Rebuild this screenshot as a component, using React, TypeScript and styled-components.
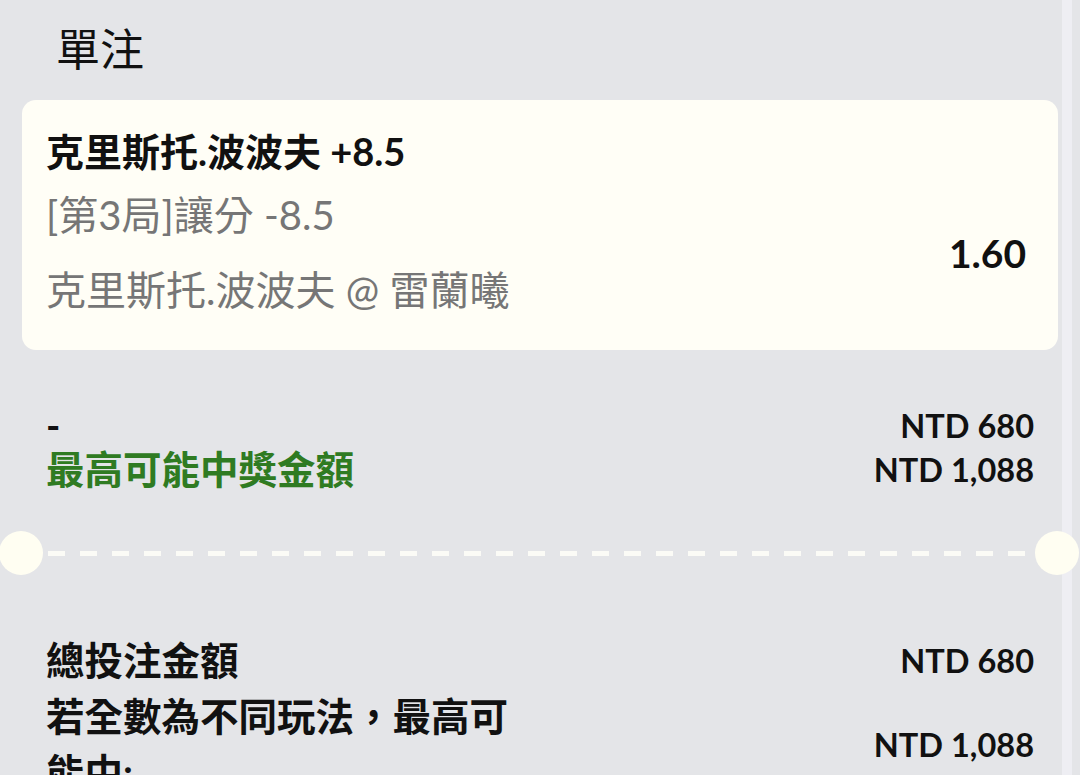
import React from "react";
import styled, { createGlobalStyle } from "styled-components";

const GlobalStyle = createGlobalStyle`
  html, body {
    margin: 0;
    padding: 0;
    background: #e4e5e8;
  }
  body {
    font-family: Lato, "Noto Sans CJK TC", sans-serif;
    color: #111;
  }
`;

const Page = styled.div`
  display: flex;
  width: 1080px;
  height: 775px;
  overflow: hidden;
  background: #e4e5e8;
`;

const Main = styled.div`
  width: 1062px;
  flex: none;
  display: flex;
  flex-direction: column;
  position: relative;
  z-index: 1;
  & > * {
    flex-shrink: 0;
  }
`;

const ScrollTrack = styled.div`
  width: 10px;
  flex: none;
  background: #eeeef3;
`;

const Title = styled.h1`
  margin: 0;
  height: 100px;
  display: flex;
  align-items: center;
  padding-left: 56px;
  padding-bottom: 6px;
  box-sizing: border-box;
  font-family: "Noto Sans CJK TC", sans-serif;
  font-size: 44px;
  font-weight: 400;
  color: #111;
`;

const Card = styled.section`
  margin-left: 22px;
  width: 1036px;
  height: 250px;
  box-sizing: border-box;
  background: #fffef6;
  border-radius: 14px;
  padding: 28px 32px 0 24px;
  display: flex;
  flex-direction: column;
`;

const Selection = styled.div`
  font-size: 38px;
  font-weight: 700;
  line-height: 46px;
  color: #111;
`;

const CardBody = styled.div`
  display: flex;
  align-items: center;
  justify-content: space-between;
  margin-top: 18px;
`;

const Details = styled.div`
  display: flex;
  flex-direction: column;
  gap: 29px;
`;

const Detail = styled.div`
  font-size: 40px;
  font-weight: 400;
  line-height: 46px;
  color: #767676;
`;

const Odds = styled.div`
  font-size: 39px;
  font-weight: 700;
  color: #111;
`;

const Summary = styled.div`
  margin-top: 53px;
  padding: 0 28px 0 46px;
  display: flex;
  flex-direction: column;
`;

const SummaryRow = styled.div`
  display: flex;
  justify-content: space-between;
  align-items: center;
  height: 44px;
`;

const Label = styled.div<{ $green?: boolean }>`
  font-size: 38.5px;
  font-weight: 700;
  color: ${(p) => (p.$green ? "#2f7b22" : "#111")};
  line-height: 44px;
`;

const Amount = styled.div`
  font-size: 32.5px;
  font-weight: 700;
  color: #111;
  white-space: nowrap;
`;

const Divider = styled.div`
  position: relative;
  margin-top: 40px;
  height: 44px;
  display: flex;
  align-items: center;
  padding: 0 30px 0 48px;
`;

const Dashes = styled.div`
  flex: 1;
  height: 5px;
  background: repeating-linear-gradient(
    to right,
    #fbfbf6 0 17px,
    transparent 17px 32px
  );
`;

const Notch = styled.div<{ $side: "left" | "right" }>`
  position: absolute;
  top: 0;
  width: 44px;
  height: 44px;
  border-radius: 50%;
  background: #fffef2;
  ${(p) => (p.$side === "left" ? "left: -1px;" : "left: 1035px;")}
`;

const Totals = styled.div`
  margin-top: 57px;
  padding: 0 28px 0 46px;
  display: flex;
  flex-direction: column;
`;

const TotalRow = styled.div`
  display: flex;
  justify-content: space-between;
  align-items: center;
`;

const TotalLabel = styled.div`
  width: 480px;
  font-size: 38.5px;
  font-weight: 700;
  line-height: 56px;
  color: #111;
`;

export default function App() {
  return (
    <>
      <GlobalStyle />
      <Page>
        <Main>
          <Title>單注</Title>
          <Card>
            <Selection>克里斯托.波波夫 +8.5</Selection>
            <CardBody>
              <Details>
                <Detail>[第3局]讓分 -8.5</Detail>
                <Detail>克里斯托.波波夫 @ 雷蘭曦</Detail>
              </Details>
              <Odds>1.60</Odds>
            </CardBody>
          </Card>
          <Summary>
            <SummaryRow>
              <Label>-</Label>
              <Amount>NTD 680</Amount>
            </SummaryRow>
            <SummaryRow>
              <Label $green>最高可能中獎金額</Label>
              <Amount>NTD 1,088</Amount>
            </SummaryRow>
          </Summary>
          <Divider>
            <Notch $side="left" />
            <Dashes />
            <Notch $side="right" />
          </Divider>
          <Totals>
            <TotalRow>
              <TotalLabel>總投注金額</TotalLabel>
              <Amount>NTD 680</Amount>
            </TotalRow>
            <TotalRow>
              <TotalLabel>若全數為不同玩法，最高可能中:</TotalLabel>
              <Amount>NTD 1,088</Amount>
            </TotalRow>
          </Totals>
        </Main>
        <ScrollTrack />
      </Page>
    </>
  );
}
